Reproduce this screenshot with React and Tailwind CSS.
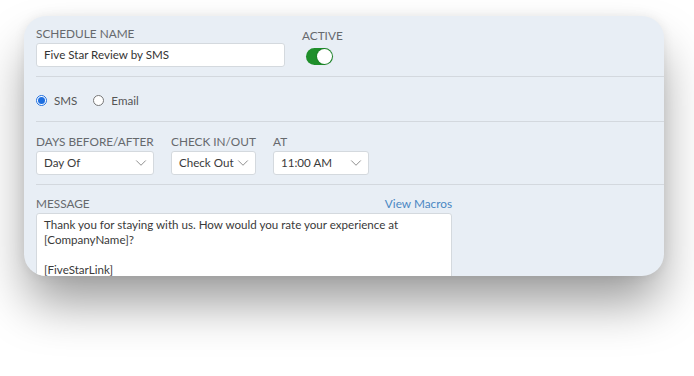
import { ChevronDown } from "lucide-react";

function Label({ children, className = "" }) {
  return (
    <div className={"whitespace-nowrap text-[11.8px] leading-[15px] uppercase text-[#66696d] " + className}>
      {children}
    </div>
  );
}

function Select({ value, width }) {
  return (
    <div
      className={
        "flex h-[24px] items-center justify-between whitespace-nowrap rounded-[3px] border border-[#d4d9de] bg-white pl-[7px] pr-[3px] text-[11.6px] text-[#3a3a3a] " +
        width
      }
    >
      <span>{value}</span>
      <ChevronDown size={18} strokeWidth={1.1} className="text-[#777]" />
    </div>
  );
}

function Radio({ checked, label }) {
  return (
    <label className="flex items-center gap-[7px] text-[11.6px] text-[#555]">
      {checked ? (
        <span className="flex h-[11px] w-[11px] items-center justify-center rounded-full border border-[#1f6fe0] bg-white">
          <span className="h-[7px] w-[7px] rounded-full bg-[#1f6fe0]" />
        </span>
      ) : (
        <span className="h-[11px] w-[11px] rounded-full border border-[#777] bg-white" />
      )}
      {label}
    </label>
  );
}

export default function App() {
  return (
    <div className="h-[376px] w-[694px] bg-white pt-[16px] pl-[24px] font-['Lato','Open_Sans',sans-serif]">
      <div className="h-[260px] w-[640px] overflow-hidden rounded-[22px] bg-[#e8eef5] pl-[12px] shadow-[0_30px_50px_-4px_rgba(0,0,0,0.4),0_0_12px_rgba(0,0,0,0.07)]">
        {/* name + active */}
        <div className="flex border-b border-[#d3d8de] pt-[10px] pb-[9px]">
          <div>
            <Label>Schedule Name</Label>
            <div className="mt-[2px] flex h-[24px] w-[249px] items-center rounded-[3px] border border-[#d4d9de] bg-white pl-[7px] text-[11.6px] text-[#333]">
              Five Star Review by SMS
            </div>
          </div>
          <div className="ml-[17px] pt-[2px]">
            <Label>Active</Label>
            <div className="mt-[5px] ml-[4px] flex h-[17px] w-[27px] items-center justify-end rounded-full bg-[#1f8f2b] pr-[1px]">
              <span className="h-[15px] w-[15px] rounded-full bg-white shadow-[0_0_2px_rgba(0,0,0,0.3)]" />
            </div>
          </div>
        </div>

        {/* channel */}
        <div className="flex h-[45px] items-center gap-[16px] border-b border-[#d3d8de] pt-[3px]">
          <Radio checked label="SMS" />
          <Radio label="Email" />
        </div>

        {/* timing */}
        <div className="flex gap-[17px] border-b border-[#d3d8de] pt-[12px] pb-[9px]">
          <div>
            <Label>Days Before/After</Label>
            <div className="mt-[2px]">
              <Select value="Day Of" width="w-[118px]" />
            </div>
          </div>
          <div>
            <Label>Check In/Out</Label>
            <div className="mt-[2px]">
              <Select value="Check Out" width="w-[85px]" />
            </div>
          </div>
          <div>
            <Label>At</Label>
            <div className="mt-[2px]">
              <Select value="11:00 AM" width="w-[96px]" />
            </div>
          </div>
        </div>

        {/* message */}
        <div className="w-[416px] pt-[11px]">
          <div className="flex items-end justify-between">
            <Label>Message</Label>
            <span className="text-[11.8px] leading-[15px] text-[#4a87c3]">View Macros</span>
          </div>
          <div className="mt-[2px] h-[80px] rounded-[3px] border border-[#d4d9de] bg-white px-[7px] pt-[3px] text-[11.6px] leading-[15px] text-[#3a3a3a]">
            <div>Thank you for staying with us. How would you rate your experience at</div>
            <div>[CompanyName]?</div>
            <div className="h-[15px]" />
            <div>[FiveStarLink]</div>
          </div>
        </div>
      </div>
    </div>
  );
}
